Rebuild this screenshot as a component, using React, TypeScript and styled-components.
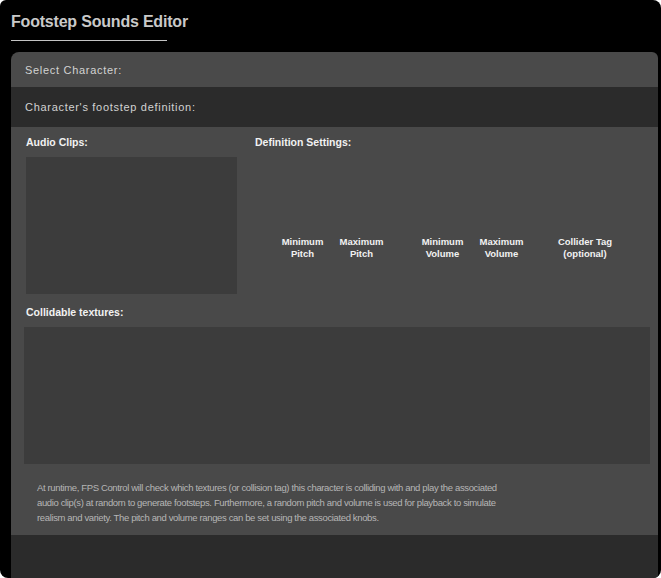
import React from "react";
import styled, { createGlobalStyle } from "styled-components";

const Global = createGlobalStyle`
  html, body { margin: 0; padding: 0; background: #ffffff; }
  #root { width: 661px; height: 578px; }
`;

const sans = `"Liberation Sans", Arial, sans-serif`;

const Window = styled.div`
  width: 661px;
  height: 578px;
  background: #000;
  border-radius: 6px 8px 8px 8px;
  display: flex;
  flex-direction: column;
  overflow: hidden;
  box-sizing: border-box;
`;

const Header = styled.div`
  padding: 11px 0 0 11px;
  display: flex;
  flex-direction: column;
  align-items: flex-start;
`;

const Title = styled.h1`
  margin: 0;
  font-family: ${sans};
  font-weight: 700;
  font-size: 16px;
  letter-spacing: -0.2px;
  line-height: 22px;
  color: #c9c9c9;
`;

const Underline = styled.div`
  margin-top: 7px;
  width: 156px;
  height: 1px;
  background: #c4c4c4;
`;

const Panel = styled.div`
  margin: 11px 3px 0 11px;
  flex: 1;
  display: flex;
  flex-direction: column;
  border-radius: 8px 6px 0 0;
  overflow: hidden;
`;

const Row = styled.div<{ $h: number; $bg: string }>`
  height: ${(p) => p.$h}px;
  background: ${(p) => p.$bg};
  display: flex;
  align-items: center;
  padding-left: 14px;
  font-family: ${sans};
  font-size: 11px;
  letter-spacing: 0.7px;
  color: #d2d2d2;
`;

const Main = styled.div`
  height: 408px;
  background: #494949;
  display: flex;
  flex-direction: column;
  padding: 8px 8px 0 13px;
  box-sizing: border-box;
`;

const Top = styled.div`
  display: flex;
  gap: 18px;
  padding-left: 2px;
`;

const Column = styled.div`
  display: flex;
  flex-direction: column;
`;

const Heading = styled.div`
  font-family: ${sans};
  font-weight: 700;
  font-size: 10.5px;
  line-height: 14px;
  color: #f2f2f2;
`;

const ListBox = styled.div<{ $w?: number; $h: number }>`
  ${(p) => (p.$w ? `width: ${p.$w}px;` : "")}
  height: ${(p) => p.$h}px;
  background: #3c3c3c;
`;

const ClipsBox = styled(ListBox)`
  margin-top: 8px;
`;

const Knobs = styled.div`
  display: flex;
  padding: 87px 0 0 18px;
`;

const KnobGroup = styled.div<{ $ml: number }>`
  display: flex;
  margin-left: ${(p) => p.$ml}px;
`;

const KnobLabel = styled.div<{ $w: number }>`
  width: ${(p) => p.$w}px;
  text-align: center;
  font-family: ${sans};
  font-weight: 700;
  font-size: 9.5px;
  line-height: 12px;
  color: #f2f2f2;
`;

const Section = styled.div`
  margin-top: 11px;
  display: flex;
  flex-direction: column;
  gap: 8px;
`;

const SectionHeading = styled(Heading)`
  padding-left: 2px;
`;

const Description = styled.p`
  margin: 16px 0 0 13px;
  font-family: ${sans};
  font-size: 9.5px;
  line-height: 15px;
  letter-spacing: -0.36px;
  color: #b6b6b6;
`;

const Footer = styled.div`
  flex: 1;
  background: #2b2b2b;
`;

export default function App() {
  return (
    <>
      <Global />
      <Window>
        <Header>
          <Title>Footstep Sounds Editor</Title>
          <Underline />
        </Header>
        <Panel>
          <Row $h={35} $bg="#4a4a4a">Select Character:</Row>
          <Row $h={40} $bg="#2b2b2b">Character's footstep definition:</Row>
          <Main>
            <Top>
              <Column>
                <Heading>Audio Clips:</Heading>
                <ClipsBox $w={211} $h={137} />
              </Column>
              <Column>
                <Heading>Definition Settings:</Heading>
                <Knobs>
                  <KnobGroup $ml={0}>
                    <KnobLabel $w={59}>Minimum<br />Pitch</KnobLabel>
                    <KnobLabel $w={59}>Maximum<br />Pitch</KnobLabel>
                  </KnobGroup>
                  <KnobGroup $ml={22}>
                    <KnobLabel $w={59}>Minimum<br />Volume</KnobLabel>
                    <KnobLabel $w={59}>Maximum<br />Volume</KnobLabel>
                  </KnobGroup>
                  <KnobGroup $ml={14}>
                    <KnobLabel $w={80}>Collider Tag<br />(optional)</KnobLabel>
                  </KnobGroup>
                </Knobs>
              </Column>
            </Top>
            <Section>
              <SectionHeading>Collidable textures:</SectionHeading>
              <ListBox $h={137} />
            </Section>
            <Description>
              At runtime, FPS Control will check which textures (or collision tag) this character is colliding with and play the associated
              <br />
              audio clip(s) at random to generate footsteps. Furthermore, a random pitch and volume is used for playback to simulate
              <br />
              realism and variety. The pitch and volume ranges can be set using the associated knobs.
            </Description>
          </Main>
          <Footer />
        </Panel>
      </Window>
    </>
  );
}
